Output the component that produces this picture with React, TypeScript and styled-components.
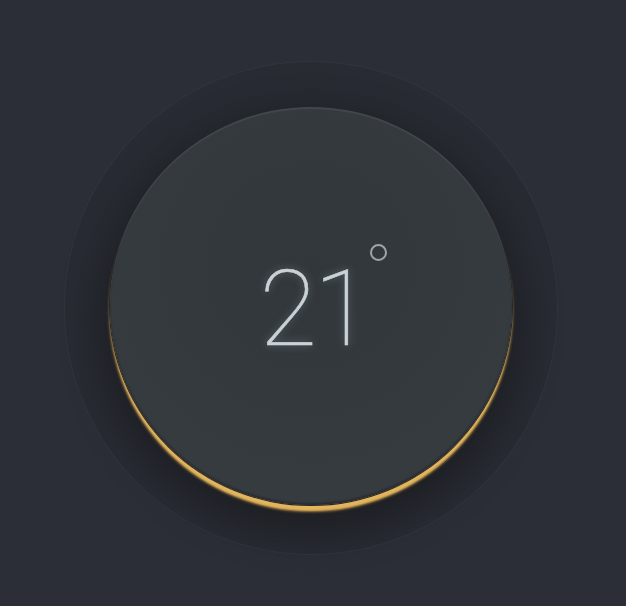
import React from "react";
import styled, { createGlobalStyle } from "styled-components";

const Global = createGlobalStyle`
  html, body { margin: 0; padding: 0; background: #2b2e37; }
  body { font-family: "Roboto", "Liberation Sans", sans-serif; }
`;

const Stage = styled.main`
  box-sizing: border-box;
  min-height: 606px;
  width: 626px;
  display: flex;
  align-items: center;
  justify-content: center;
  padding: 10px 4px 0 0;
  background: #2b2e37;
`;

const OuterRing = styled.div`
  box-sizing: border-box;
  width: 494px;
  height: 494px;
  border-radius: 50%;
  display: flex;
  align-items: center;
  justify-content: center;
  background: radial-gradient(circle at 50% 50%, #25282e 0%, #272a31 55%, #2a2d35 100%);
  border: 1px solid rgba(255, 255, 255, 0.045);
`;

const Dial = styled.div`
  box-sizing: border-box;
  width: 402px;
  height: 398px;
  margin-top: -4px;
  border-radius: 50%;
  display: flex;
  align-items: center;
  justify-content: center;
  background: radial-gradient(circle at 50% 40%, #32373c 0%, #353a3f 60%, #383d42 100%);
  box-shadow:
    inset 0 2px 1px rgba(255, 255, 255, 0.07),
    inset 0 -2px 2px rgba(0, 0, 0, 0.25),
    0 0 0 1px #24272c,
    0 6px 2px 0 #e3b55c,
    0 6px 3px 1px rgba(200, 150, 70, 0.55),
    0 18px 40px 10px rgba(0, 0, 0, 0.28);
`;

const Reading = styled.div`
  position: relative;
  margin: 7px 0 0 6px;
  display: flex;
  align-items: center;
  justify-content: center;
`;

const Number = styled.span`
  font-family: "Roboto", "Inter", sans-serif;
  font-weight: 100;
  font-size: 105px;
  line-height: 1;
  letter-spacing: -3px;
  color: #c9d3d6;
  -webkit-text-stroke: 0.6px #c9d3d6;
  text-shadow: 0 0 8px rgba(200, 215, 220, 0.35);
`;

const Degree = styled.span`
  position: absolute;
  box-sizing: border-box;
  top: -13px;
  right: -19px;
  width: 17px;
  height: 17px;
  border-radius: 50%;
  border: 2px solid #9ca5a8;
`;

export default function App() {
  return (
    <>
      <Global />
      <Stage>
        <OuterRing>
          <Dial>
            <Reading>
              <Number>21</Number>
              <Degree />
            </Reading>
          </Dial>
        </OuterRing>
      </Stage>
    </>
  );
}
